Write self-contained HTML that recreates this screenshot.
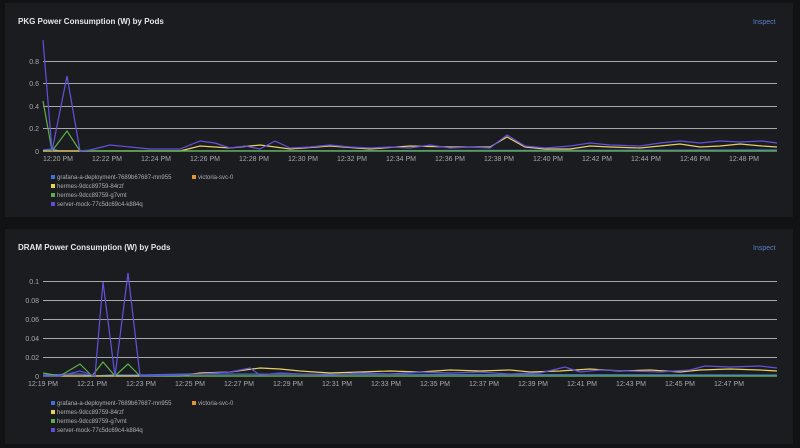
<!DOCTYPE html>
<html><head><meta charset="utf-8"><style>
html,body{margin:0;padding:0;background:#111214;width:800px;height:448px;overflow:hidden;font-family:"Liberation Sans",sans-serif}
.p{position:absolute;left:5px;width:788px;background:#1b1c20;}
</style></head><body>
<div class="p" style="top:3px;height:214px"></div>
<div class="p" style="top:229px;height:215px"></div>
<svg width="800" height="448" style="position:absolute;left:0;top:0" font-family="Liberation Sans, sans-serif">
<g fill="#e6e6e6" font-size="8" font-weight="bold">
<text x="18" y="24">PKG Power Consumption (W) by Pods</text>
<text x="18" y="250">DRAM Power Consumption (W) by Pods</text></g>
<g fill="#5b7ec9" font-size="7"><text x="753" y="24">Inspect</text><text x="753" y="250">Inspect</text></g>
<g stroke="#a8a8ac" stroke-width="1">
<line x1="43" x2="777" y1="61.5" y2="61.5"/><line x1="43" x2="777" y1="83.5" y2="83.5"/><line x1="43" x2="777" y1="106.5" y2="106.5"/><line x1="43" x2="777" y1="128.5" y2="128.5"/>
<line x1="43" x2="777" y1="281.5" y2="281.5"/><line x1="43" x2="777" y1="300.5" y2="300.5"/><line x1="43" x2="777" y1="319.5" y2="319.5"/><line x1="43" x2="777" y1="338.5" y2="338.5"/><line x1="43" x2="777" y1="357.5" y2="357.5"/>
</g>
<g fill="#a8a8ac" font-size="7" text-anchor="end">
<text x="39" y="64">0.8</text><text x="39" y="86">0.6</text><text x="39" y="109">0.4</text><text x="39" y="131">0.2</text><text x="39" y="154">0</text>
<text x="39" y="284">0.1</text><text x="39" y="303">0.08</text><text x="39" y="322">0.06</text><text x="39" y="341">0.04</text><text x="39" y="360">0.02</text><text x="39" y="379">0</text>
</g>
<g fill="#a8a8ac" font-size="7" text-anchor="middle">
<text x="58" y="161">12:20 PM</text><text x="107" y="161">12:22 PM</text><text x="156" y="161">12:24 PM</text><text x="205" y="161">12:26 PM</text><text x="254" y="161">12:28 PM</text><text x="303" y="161">12:30 PM</text><text x="352" y="161">12:32 PM</text><text x="401" y="161">12:34 PM</text><text x="450" y="161">12:36 PM</text><text x="499" y="161">12:38 PM</text><text x="548" y="161">12:40 PM</text><text x="597" y="161">12:42 PM</text><text x="646" y="161">12:44 PM</text><text x="695" y="161">12:46 PM</text><text x="744" y="161">12:48 PM</text>
<text x="43" y="386">12:19 PM</text><text x="92" y="386">12:21 PM</text><text x="141" y="386">12:23 PM</text><text x="190" y="386">12:25 PM</text><text x="239" y="386">12:27 PM</text><text x="288" y="386">12:29 PM</text><text x="337" y="386">12:31 PM</text><text x="386" y="386">12:33 PM</text><text x="435" y="386">12:35 PM</text><text x="484" y="386">12:37 PM</text><text x="533" y="386">12:39 PM</text><text x="582" y="386">12:41 PM</text><text x="631" y="386">12:43 PM</text><text x="680" y="386">12:45 PM</text><text x="729" y="386">12:47 PM</text>
</g>
<g fill="none" stroke-width="1.2">
<polyline stroke="#e0952e" points="43,151 777,151"/>
<polyline stroke="#3f6fd8" points="43,150 52,149 60,151 777,150"/>
<polyline stroke="#e8d060" points="43,151 180,151 200,146 230,148 260,145 290,149 330,146 370,149 410,146 450,147 490,147 507,137 525,147 545,149 570,149 590,146 610,147 640,148 660,146 680,144 700,147 720,146 740,144 762,146 777,147"/>
<polyline stroke="#5bb04a" points="43,101 52,151 67,131 80,151 777,151"/>
<polyline stroke="#6152dc" points="43,40 52,151 67,76 80,151 90,150 110,145 130,147 150,149 180,149 200,141 215,143 230,148 245,146 260,149 275,141 290,148 310,147 330,145 350,147 370,148 390,147 410,148 430,145 450,148 470,147 490,148 507,135 525,146 545,148 570,146 590,143 610,145 640,146 660,143 680,141 700,143 720,141 740,142 762,141 777,143"/>
<polyline stroke="#e0952e" points="43,376 777,376"/>
<polyline stroke="#3f6fd8" points="43,375 80,374 95,376 110,375 140,375 190,374 777,375"/>
<polyline stroke="#e8d060" points="43,376 180,376 200,373 230,372 260,368 280,369 300,371 330,373 360,372 390,371 420,372 450,370 480,371 510,370 530,372 560,371 590,369 620,371 650,370 680,372 700,370 730,369 760,370 777,371"/>
<polyline stroke="#5bb04a" points="43,373 60,376 80,364 92,376 103,362 115,376 128,364 140,376 777,376"/>
<polyline stroke="#6152dc" points="43,376 60,376 80,371 95,376 103,282 115,376 128,273 140,376 180,375 200,374 230,372 250,368 260,375 280,373 300,374 330,375 360,373 390,374 420,372 450,373 480,372 510,374 540,373 565,367 580,372 600,370 630,371 660,372 690,370 705,366 730,367 760,366 777,368"/>
</g>
<g font-size="6" fill="#b0b0b4">
<rect x="51" y="175" width="4" height="4" fill="#3f6fd8"/><text x="57" y="179">grafana-a-deployment-7689b67687-mn955</text>
<rect x="192" y="175" width="4" height="4" fill="#e0952e"/><text x="198" y="179">victoria-svc-0</text>
<rect x="51" y="184" width="4" height="4" fill="#e8d060"/><text x="57" y="188">hermes-9dcc89759-84rzf</text>
<rect x="51" y="193" width="4" height="4" fill="#5bb04a"/><text x="57" y="197">hermes-9dcc89759-g7vmt</text>
<rect x="51" y="202" width="4" height="4" fill="#5b4fd6"/><text x="57" y="206">server-mock-77c5dc69c4-k884q</text>
<rect x="51" y="401" width="4" height="4" fill="#3f6fd8"/><text x="57" y="405">grafana-a-deployment-7689b67687-mn955</text>
<rect x="192" y="401" width="4" height="4" fill="#e0952e"/><text x="198" y="405">victoria-svc-0</text>
<rect x="51" y="410" width="4" height="4" fill="#e8d060"/><text x="57" y="414">hermes-9dcc89759-84rzf</text>
<rect x="51" y="419" width="4" height="4" fill="#5bb04a"/><text x="57" y="423">hermes-9dcc89759-g7vmt</text>
<rect x="51" y="428" width="4" height="4" fill="#5b4fd6"/><text x="57" y="432">server-mock-77c5dc69c4-k884q</text>
</g>
</svg>
</body></html>
